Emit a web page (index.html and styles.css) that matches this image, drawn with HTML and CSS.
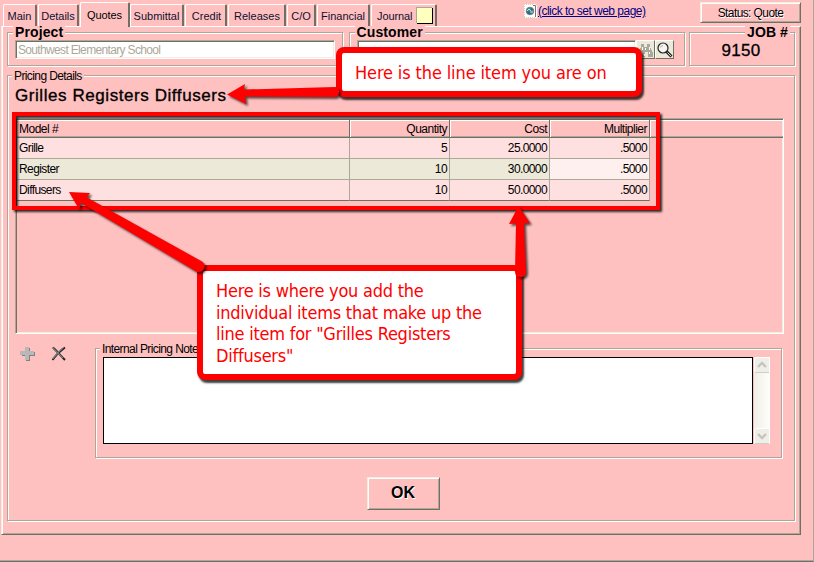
FILE: index.html
```html
<!DOCTYPE html>
<html lang="en">
<head>
<meta charset="utf-8">
<title>Quotes</title>
<link rel="stylesheet" href="styles.css">
</head>
<body>
<div class="window">
  <header class="top">
    <nav class="tabs">
      <div class="tab tab-main">Main</div>
      <div class="tab tab-details">Details</div>
      <div class="tab tab-quotes active">Quotes</div>
      <div class="tab tab-submittal">Submittal</div>
      <div class="tab tab-credit">Credit</div>
      <div class="tab tab-releases">Releases</div>
      <div class="tab tab-co">C/O</div>
      <div class="tab tab-financial">Financial</div>
      <div class="tab tab-journal">Journal<i class="note"></i></div>
    </nav>
    <div class="web">
      <svg width="13" height="14" viewBox="0 0 13 14"><path d="M0 0h11l2 2v12H0z" fill="#fff"/><path d="M.5 0v14M0 .5h10M0 13.5h12" stroke="#d8d8b0" stroke-dasharray="1 1"/><path d="M9 1.500h2.500V13" fill="none" stroke="#777"/><circle cx="6" cy="7" r="3.800" fill="#2a67a0"/><path d="M3 5l3-2 1 2-2 3zM7 7l2-1v3L7 10z" fill="#4b9b5b"/><path d="M3 7l2-2 2 2M6 8h3" stroke="#bde" fill="none"/><circle cx="6" cy="7" r="3.800" fill="none" stroke="#777" stroke-width=".8"/></svg>
      <a class="link">(click to set web page)</a>
    </div>
    <div class="button status"><span>Status: Quote</span></div>
  </header>

  <main class="page">
    <div class="info">
      <section class="group project">
        <h2 class="legend bold">Project</h2>
        <div class="input"><span>Southwest Elementary School</span></div>
      </section>
      <section class="group customer">
        <h2 class="legend bold">Customer</h2>
        <div class="input"></div>
        <div class="tool"><svg width="17" height="17" viewBox="0 0 17 17" shape-rendering="crispEdges"><path d="M4 3h3v3h3V3h3v3l3 6v4h-5v-5H8v5H1v-4l3-6z" fill="#aca899"/><path d="M5 6v3M12 6v3M4 11v2M12 11v2M8 7v2M7 13v2" stroke="#fff"/></svg></div>
        <div class="tool"><svg width="17" height="17" viewBox="0 0 17 17"><circle cx="7" cy="7" r="5" fill="#f4f4f0" stroke="#222" stroke-width="1.2"/><path d="M4.500 6.500q.5-2 2.500-2" fill="none" stroke="#aaa"/><path d="M10.500 10.500l5 5" stroke="#222" stroke-width="3"/><path d="M11.500 11.500l3.500 3.500" stroke="#ddd"/></svg></div>
      </section>
      <section class="group job">
        <h2 class="legend bold">JOB #</h2>
        <div class="number">9150</div>
      </section>
    </div>

    <section class="group pricing">
      <h2 class="legend"><span>Pricing Details</span></h2>
      <h1 class="title">Grilles Registers Diffusers</h1>
      <div class="grid">
        <div class="row head"><div>Model #</div><div>Quantity</div><div>Cost</div><div>Multiplier</div></div>
        <div class="row"><div>Grille</div><div>5</div><div>25.0000</div><div>.5000</div></div>
        <div class="row selected"><div>Register</div><div>10</div><div>30.0000</div><div class="editing">.5000</div></div>
        <div class="row last"><div>Diffusers</div><div>10</div><div>50.0000</div><div>.5000</div></div>
      </div>
      <div class="lower">
        <div class="actions">
          <svg width="16" height="16" viewBox="0 0 16 16" shape-rendering="crispEdges"><path d="M6 2h4v4h5v4h-5v5H6v-5H2V6h4z" fill="#808080"/><path d="M5 1h4v4h5v4H9v5H5V9H0V5h5z" fill="#b8b8b8"/></svg>
          <svg width="16" height="16" viewBox="0 0 16 16"><path d="M2 1.500C5 4 9 9 14 14" fill="none" stroke="#222" stroke-width="2"/><path d="M14 1.500C9 5 5 9 1.500 14" fill="none" stroke="#222" stroke-width="1.800"/><path d="M1.500 1.500C5 5 8 9 12 12M12 2C8 5 5 9 2 12.500" fill="none" stroke="#777" stroke-width="1.500"/></svg>
        </div>
        <section class="group notes">
          <h2 class="legend"><span>Internal Pricing Notes</span></h2>
          <div class="textarea"></div>
          <div class="scroll">
            <svg width="16" height="16" viewBox="0 0 16 16"><rect x=".5" y=".5" width="15" height="15" rx="1.500" fill="#efeee8" stroke="#fff"/><path d="M1 15.500h14" stroke="#d0cec0"/><path d="M4 10l4-4 4 4" fill="none" stroke="#c5c4bd" stroke-width="2.400"/></svg>
            <svg width="16" height="16" viewBox="0 0 16 16"><rect x=".5" y=".5" width="15" height="15" rx="1.500" fill="#efeee8" stroke="#fff"/><path d="M1 15.500h14" stroke="#d0cec0"/><path d="M4 6l4 4 4-4" fill="none" stroke="#c5c4bd" stroke-width="2.400"/></svg>
          </div>
        </section>
      </div>
      <div class="button ok">OK</div>
    </section>
  </main>
</div>

<div class="annotations">
  <div class="frame"></div>
  <div class="callout one"><p>Here is the line item you are on</p></div>
  <div class="callout two"><p>Here is where you add the<br>individual items that make up the<br>line item for "Grilles Registers<br>Diffusers"</p></div>
  <svg class="arrows" width="814" height="562" viewBox="0 0 814 562">
    <g fill="#f00">
      <path d="M227 94.500L245 84l-1 5.500 91-2.500q4 0 4 4.500t-4 5.500l-90-.5 1 7.500z"/>
      <path d="M69 192l21 1-3 4.500 115 64q4 3 2 7t-7 3.500L81 203l-2 6z"/>
      <path d="M518.500 206l11.500 17-6 .5 2 48q0 5.500-5.500 5.500t-5.500-5.500l1-48-7 .5z"/>
    </g>
  </svg>
</div>
</body>
</html>
```

FILE: styles.css
```css
* { box-sizing: border-box; }
body {
  margin: 0;
  width: 814px;
  height: 562px;
  overflow: hidden;
  position: relative;
  background: #ffc0c0;
  color: #000;
  font: 12px/14px "Liberation Sans", Arial, sans-serif;
  letter-spacing: -.6px;
}
h1, h2, p { margin: 0; font-weight: normal; }
svg { display: block; }
.window {
  height: 562px;
  border-right: 1px solid #aca899;
  border-bottom: 1px solid #716f64;
  box-shadow: inset 0 -1px #aca899;
}
.top { display: flex; align-items: flex-start; height: 26px; }
.tabs {
  display: flex;
  align-items: flex-end;
  width: 524px;
  height: 26px;
  padding-left: 3px;
  font-size: 11px;
  letter-spacing: 0;
}
.tab {
  height: 22px;
  margin-right: 1px;
  padding-top: 4px;
  border: solid;
  border-width: 1px 2px 0 1px;
  border-color: #fff #716f64 #fff #fff;
  border-radius: 2px 2px 0 0;
  color: #101030;
  text-align: center;
  white-space: nowrap;
}
.tab.active {
  height: 25px;
  margin: 0 0 -1px;
  padding-top: 5px;
  background: #ffc0c0;
  color: #000;
  border-top-width: 1px;
  position: relative;
  letter-spacing: -.1px;
}
.tab-main { width: 34px; }
.tab-details { width: 41px; }
.tab-quotes { width: 50px; }
.tab-submittal { width: 54px; }
.tab-credit { width: 42px; padding-left: 2px; }
.tab-releases { width: 58px; padding-left: 1px; }
.tab-co { width: 29px; }
.tab-financial { width: 53px; }
.tab-journal { width: 66px; display: flex; padding-left: 5px; letter-spacing: -.1px; }
.note {
  width: 16px;
  height: 16px;
  margin: -1px 0 0 5px;
  background: #ffffc0;
  border: solid #000;
  border-width: 0 1px 1px 0;
  box-shadow: -1px -1px #aca899;
}
.web { display: flex; width: 176px; padding-top: 4px; }
.link { margin-left: 1px; color: #000080; text-decoration: underline; white-space: nowrap; letter-spacing: -.52px; }
.button {
  border: 1px solid;
  border-color: #f1efe2 #716f64 #716f64 #f1efe2;
  box-shadow: inset 1px 1px #fff, inset -1px -1px #aca899;
  text-align: center;
}
.status { width: 101px; height: 21px; margin-top: 2px; line-height: 20px; text-shadow: 1px 1px #fff; }
.page {
  width: 800px;
  height: 509px;
  margin-left: 1px;
  padding: 5px 5px 0;
  border: 1px solid;
  border-color: #fff #716f64 #716f64 #f1efe2;
  box-shadow: inset 1px 0 #fff, inset -1px -1px #aca899;
}
.group {
  position: relative;
  border: 1px solid #aca899;
  box-shadow: inset 1px 1px #fff, 1px 1px #fff;
}
.legend {
  position: absolute;
  top: -7px;
  left: 4px;
  padding: 0 2px;
  background: #ffc0c0;
  font-size: 12px;
  line-height: 14px;
  white-space: nowrap;
}
.legend.bold { top: -7px; left: 5px; font-size: 14px; line-height: 13px; font-weight: bold; letter-spacing: .1px; }
.info { display: flex; height: 43px; }
.info .group { height: 34px; display: flex; padding: 7px 7px 0; }
.project { width: 336px; margin-right: 6px; }
.info .customer { width: 337px; margin-right: 4px; padding-right: 10px; }
.job { width: 106px; }
.job .legend.bold { left: auto; right: 4px; }
.input {
  flex: 1;
  height: 19px;
  padding: 2px;
  border: 1px solid;
  border-color: #aca899 #fff #fff #aca899;
  box-shadow: inset 1px 1px #716f64, inset -1px -1px #f1efe2;
  background: #fff;
  color: #aca899;
  letter-spacing: -.66px;
}
.tool {
  width: 19px;
  height: 19px;
  background: #ece9d8;
  border: 1px solid;
  border-color: #fff #716f64 #716f64 #fff;
}
.number { flex: 1; padding: 2px 2px 0 0; text-align: center; font-size: 17px; line-height: 17px; letter-spacing: .3px; -webkit-text-stroke: .3px; }
.pricing { width: 788px; height: 446px; padding: 10px 7px 0; }
.title { height: 32px; font-size: 17px; line-height: 20px; white-space: nowrap; letter-spacing: .57px; -webkit-text-stroke: .35px; }
.grid {
  width: 769px;
  height: 216px;
  border: 1px solid;
  border-color: #aca899 #fff #fff #aca899;
  box-shadow: inset 1px 1px #716f64, inset -1px -1px #f1efe2;
  padding: 1px 1px 0;
}
.row { display: grid; grid-template-columns: 333px 100px 100px 100px; height: 21px; width: 633px; }
.row > div {
  padding: 3px 2px 0;
  text-align: right;
  background: #ffe0e0;
  border-right: 1px solid #aca899;
  border-bottom: 1px solid #aca899;
}
.row > div:first-child { text-align: left; }
.head { width: 766px; height: 18px; border-bottom: 1px solid #716f64; box-shadow: inset 0 1px #fff, inset 0 -1px #aca899; }
.head > div { background: none; border-right-color: #716f64; border-bottom: 0; box-shadow: 1px 0 #fff; padding-top: 2px; letter-spacing: -.5px; }
.selected > div { background: #ece9d8; }
.selected .editing { background: #fff0f0; }
.last > div { border-bottom-color: #716f64; }
.lower { display: flex; padding-top: 14px; height: 143px; }
.actions { display: flex; gap: 15px; width: 80px; padding: 0 0 0 5px; margin-top: -2px; }
.notes { width: 687px; height: 110px; padding: 8px 7px 0; display: flex; gap: 1px; }
.textarea { width: 650px; height: 87px; background: #fff; border: 1px solid #000; }
.scroll { width: 16px; height: 87px; display: flex; flex-direction: column; justify-content: space-between; background: linear-gradient(90deg, #f0f0e8, #fefefb); }
.ok {
  width: 73px;
  height: 33px;
  margin: 0 0 0 352px;
  font-size: 16px;
  line-height: 29px;
  font-weight: bold;
  letter-spacing: 0;
  text-shadow: 1px 1px #fff;
  padding-right: 1px;
}
.annotations { position: absolute; inset: 0; pointer-events: none; }
.frame {
  position: absolute;
  left: 12px;
  top: 112px;
  width: 648px;
  height: 98px;
  border: 4px solid #f00;
  filter: drop-shadow(2px 2px 1px rgba(0,0,0,.8));
}
.callout {
  position: absolute;
  background: #fff;
  border: 6px solid #f00;
  border-radius: 8px;
  box-shadow: 2px 3px 2px rgba(0,0,0,.75);
  color: #f00;
  font: 18px/21.600px "DejaVu Sans Condensed", "DejaVu Sans", sans-serif;
  font-stretch: condensed;
  letter-spacing: -.24px;
  white-space: nowrap;
}
.one { left: 336px; top: 47px; width: 306px; height: 50px; padding: 9px 13px; letter-spacing: -.13px; }
.two { left: 197px; top: 265px; width: 325px; height: 115px; padding: 9px 13px; }
.arrows { position: absolute; inset: 0; filter: drop-shadow(2px 2px 1px rgba(0,0,0,.65)); }
```
